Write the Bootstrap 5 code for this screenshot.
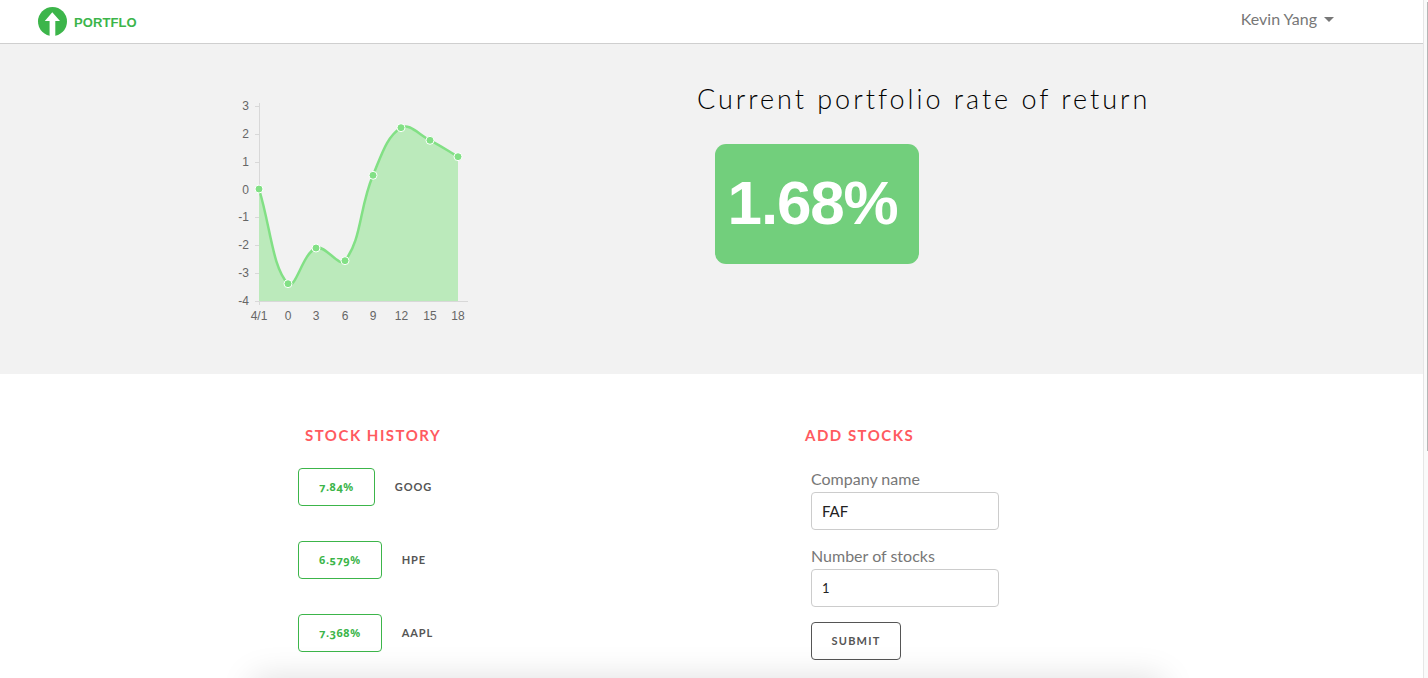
<!DOCTYPE html>
<html lang="en">
<head>
<meta charset="utf-8">
<title>Portflo</title>
<link href="https://cdn.jsdelivr.net/npm/bootstrap@5.3.0/dist/css/bootstrap.min.css" rel="stylesheet">
<style>
html,body{height:678px;overflow:hidden;background:#fff}
body{font-family:"Lato","Liberation Sans",sans-serif}
.frame{height:678px;overflow:hidden}
.page-main{width:1423px;flex:none;overflow:hidden;height:678px}
.fake-scroll{width:5px;flex:none;background:#fafafa;border-left:1px solid #e6e6e6;position:relative}
.fake-thumb{position:absolute;right:0;top:2px;width:1px;height:449px;background:#b5b5b5}
.top-bar{height:44px;padding:0 89px 0 38px;border-bottom:1px solid #cfcfcf;background:#fff}
.brand-name{font:700 13px "Liberation Sans",sans-serif;letter-spacing:.1px;color:#3cb54a;margin:1px 0 0 7px}
.user-block{margin-bottom:5px}
.user-name{font-size:16px;color:#777;margin-right:7px}
.user-caret{width:0;height:0;border-left:5px solid transparent;border-right:5px solid transparent;border-top:5px solid #777}
.hero{height:330px;background:#f2f2f2}
.chart-box{width:462px;padding-left:235px;padding-top:52px;flex:none}
.chart-box svg{display:block}
.axis-label{font:12px "Liberation Sans",sans-serif;fill:#666}
.return-side{margin-left:235px;padding-top:37px}
.return-title{font-size:27px;font-weight:300;letter-spacing:2.97px;color:#000;margin:0;line-height:36px;white-space:nowrap}
.return-badge{margin:27px 0 0 18px;width:204px;height:120px;border-radius:11px;background:#72cf7c;color:#fff;font:700 62px "Liberation Sans",sans-serif;letter-spacing:-1.2px;padding:0 9px 4px 0}
.lower{padding-top:51px}
.history-col{width:507px;margin-left:298px;flex:none}
.section-head{font-size:15px;font-weight:700;letter-spacing:1.5px;color:#ff5a5f;line-height:20px;margin:0}
.history-col .section-head{padding-left:7px;margin-bottom:23px}
.stock-row{height:38px;margin-bottom:35px}
.rate-box{height:38px;border:1px solid #3cb54a;border-radius:4px;color:#3cb54a;font-family:"Noto Sans",sans-serif;font-size:11px;font-weight:700;letter-spacing:.5px;padding:0 20px;font-variant-numeric:oldstyle-nums}
.ticker{font-size:11px;font-weight:700;letter-spacing:.9px;color:#555;margin-left:20px}
.add-form{padding:23px 0 0 6px;width:194px}
.field-label{font-size:16px;color:#777;line-height:22px;margin:0 0 2px;display:block}
.field-input{height:38px;border:1px solid #ccc;border-radius:4px;font-size:15px;color:#222;padding:0 10px;margin-bottom:15px;box-shadow:none}
.count-input{font-size:13px}
.submit-btn{width:90px;height:38px;padding:0;border:1px solid #555;border-radius:4px;font-size:11px;font-weight:700;letter-spacing:1.2px;color:#555;background:#fff}
.below-card{height:60px;width:910px;left:253px;background:#fff;box-shadow:0 0 34px rgba(0,0,0,.13);position:absolute;top:678px}
</style>
</head>
<body>
<div class="frame d-flex">
<div class="page-main position-relative">
  <nav class="navbar top-bar d-flex justify-content-between align-items-center flex-nowrap">
    <a class="d-flex align-items-center text-decoration-none" href="#">
      <svg width="29" height="29" viewBox="0 0 29 29" aria-hidden="true"><circle cx="14.5" cy="14.5" r="14.5" fill="#3cb54a"/><path d="M14.300 5.300 22 14h-4.700v15h-5.700V14H6.800z" fill="#fff"/></svg>
      <span class="brand-name">PORTFLO</span>
    </a>
    <div class="user-block d-flex align-items-center"><span class="user-name">Kevin Yang</span><span class="user-caret"></span></div>
  </nav>
  <section class="hero d-flex">
    <div class="chart-box">
      <svg width="240" height="230" viewBox="235 96 240 230" role="img" aria-label="Rate of return chart">
        <g stroke="#d8d8d8" fill="none">
          <path d="M259.500 103V305M255 301.500H468M255 106.500h4M255 134.500h4M255 162.500h4M255 190.500h4M255 217.500h4M255 245.500h4M255 273.500h4"/>
        </g>
        <g class="axis-label" text-anchor="end">
          <text x="249" y="110">3</text><text x="249" y="138">2</text><text x="249" y="166">1</text><text x="249" y="194">0</text><text x="249" y="221">-1</text><text x="249" y="249">-2</text><text x="249" y="277">-3</text><text x="249" y="305">-4</text>
        </g>
        <g class="axis-label" text-anchor="middle">
          <text x="259" y="320">4/1</text><text x="288" y="320">0</text><text x="316" y="320">3</text><text x="345" y="320">6</text><text x="373" y="320">9</text><text x="401.500" y="320">12</text><text x="430" y="320">15</text><text x="458" y="320">18</text>
        </g>
        <path id="areaPath" fill="#bbeabb"/>
        <path id="linePath" fill="none" stroke="#82e085" stroke-width="2.500"/>
        <g id="dots" fill="#82e085" stroke="#fff" stroke-width="1"></g>
      </svg>
    </div>
    <div class="return-side">
      <h1 class="return-title">Current portfolio rate of return</h1>
      <div class="return-badge d-flex align-items-center justify-content-center">1.68%</div>
    </div>
  </section>
  <section class="lower d-flex">
    <div class="history-col">
      <h2 class="section-head">STOCK HISTORY</h2>
      <div class="stock-row d-flex align-items-center"><div class="rate-box d-flex align-items-center">7.84%</div><span class="ticker">GOOG</span></div>
      <div class="stock-row d-flex align-items-center"><div class="rate-box d-flex align-items-center">6.579%</div><span class="ticker">HPE</span></div>
      <div class="stock-row d-flex align-items-center"><div class="rate-box d-flex align-items-center">7.368%</div><span class="ticker">AAPL</span></div>
    </div>
    <div>
      <h2 class="section-head">ADD STOCKS</h2>
      <form class="add-form">
        <label class="field-label" for="co">Company name</label>
        <input class="form-control field-input" id="co" value="FAF">
        <label class="field-label" for="num">Number of stocks</label>
        <input class="form-control field-input count-input" id="num" value="1">
        <button type="button" class="btn submit-btn">SUBMIT</button>
      </form>
    </div>
  </section>
  <div class="below-card"></div>
</div>
<div class="fake-scroll"><div class="fake-thumb"></div></div>
</div>
<script>
var P=[[259,189],[288,283.7],[316,248],[345,260.7],[373,175.3],[401,127.7],[430,140.3],[458,156.7]],t=.4,c=[];
P.forEach(function(p,i){var a=P[i-1]||p,b=P[i+1]||p,d1=Math.hypot(p[0]-a[0],p[1]-a[1]),d2=Math.hypot(b[0]-p[0],b[1]-p[1]),s=d1+d2;
c.push({i:[p[0]-t*d1/s*(b[0]-a[0]),p[1]-t*d1/s*(b[1]-a[1])],o:[p[0]+t*d2/s*(b[0]-a[0]),p[1]+t*d2/s*(b[1]-a[1])]});});
var d="M"+P[0];for(var i=1;i<P.length;i++){d+="C"+c[i-1].o+" "+c[i].i+" "+P[i];}
document.getElementById("linePath").setAttribute("d",d);
document.getElementById("areaPath").setAttribute("d",d+"V301H259Z");
document.getElementById("dots").innerHTML=P.map(function(p){return '<circle cx="'+p[0]+'" cy="'+p[1]+'" r="4"/>'}).join("");
</script>
<script src="https://cdn.jsdelivr.net/npm/bootstrap@5.3.0/dist/js/bootstrap.bundle.min.js"></script>
</body>
</html>
